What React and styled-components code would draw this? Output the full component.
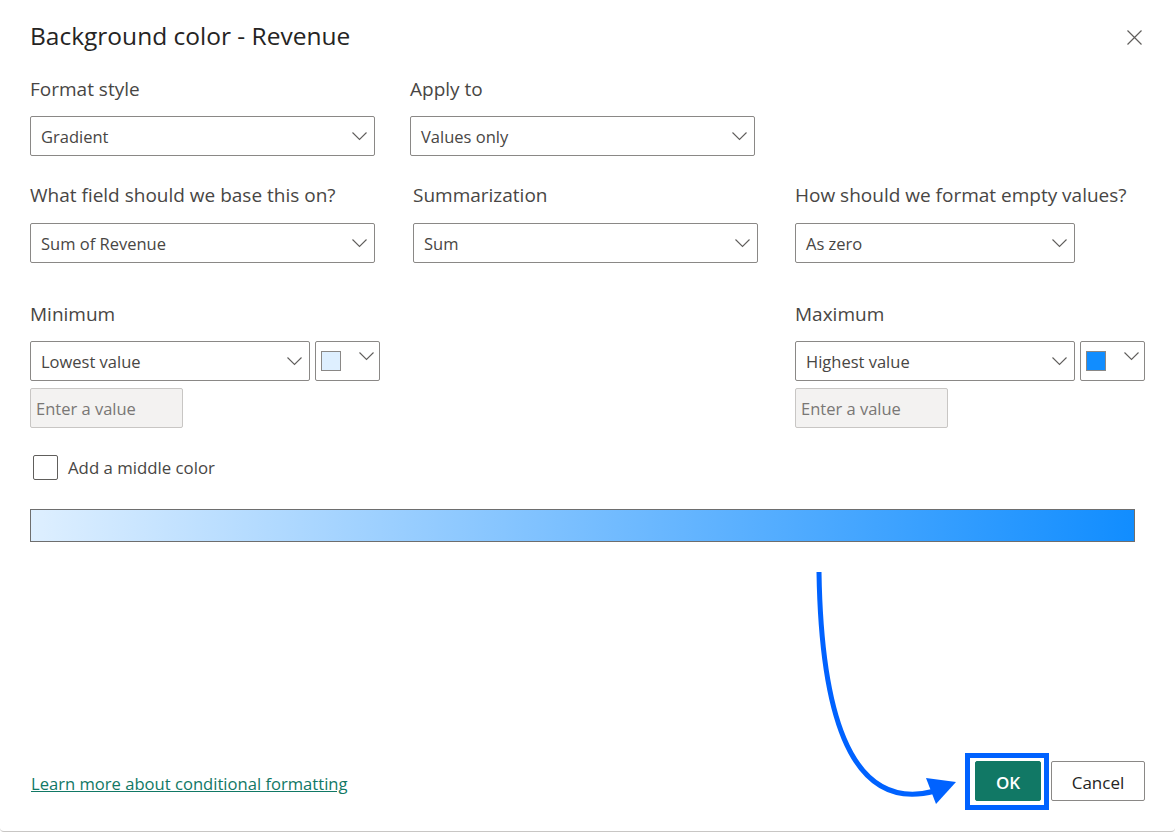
import styled, { createGlobalStyle } from 'styled-components';

const GlobalStyle = createGlobalStyle`
  html, body {
    margin: 0;
    padding: 0;
    background: #fff;
  }
  body {
    font-family: 'Open Sans', 'Noto Sans', sans-serif;
    color: #3b3a39;
  }
`;

const Dialog = styled.div`
  position: relative;
  box-sizing: border-box;
  width: 1175px;
  height: 832px;
  padding: 20px 30px 30px;
  display: flex;
  flex-direction: column;
  background: #fff;
  border-bottom: 1px solid #c8c6c4;
  border-radius: 0 0 4px 4px;
  overflow: hidden;
`;

const Header = styled.div`
  display: flex;
  justify-content: space-between;
  align-items: center;
  height: 32px;
`;

const Title = styled.h1`
  margin: 0;
  font-size: 24.5px;
  line-height: 32px;
  font-weight: 400;
  color: #252423;
`;

const CloseButton = styled.button`
  display: flex;
  margin: 2px 3px 0 0;
  padding: 0;
  border: 0;
  background: none;
`;

const Row = styled.div`
  display: flex;
  margin-top: ${(p) => p.$top}px;
`;

const Field = styled.div`
  width: ${(p) => p.$width}px;
  margin-left: ${(p) => p.$left || 0}px;
  flex-shrink: 0;
`;

const Label = styled.div`
  height: 26px;
  margin-bottom: ${(p) => p.$gap}px;
  font-size: 19px;
  line-height: 26px;
  white-space: nowrap;
  color: #484644;
`;

const SelectBox = styled.div`
  box-sizing: border-box;
  display: flex;
  align-items: center;
  justify-content: space-between;
  width: ${(p) => (p.$width ? `${p.$width}px` : '100%')};
  height: 40px;
  padding: 0 7px 0 10px;
  border: 1px solid #8a8886;
  border-radius: 2px;
  font-size: 16.5px;
  color: #484644;
  background: #fff;
  white-space: nowrap;
`;

const PickerBox = styled.div`
  box-sizing: border-box;
  display: flex;
  justify-content: space-between;
  width: 65px;
  height: 40px;
  padding: 9px 5px 0 5px;
  border: 1px solid #8a8886;
  border-radius: 2px;
`;

const Swatch = styled.div`
  box-sizing: border-box;
  width: 20px;
  height: 20px;
  border: 1px solid #8a8886;
  background: ${(p) => p.$color};
`;

const PickerChevron = styled.div`
  display: flex;
  height: 11px;
`;

const ColorRow = styled.div`
  display: flex;
  gap: 5px;
`;

const DisabledInput = styled.div`
  box-sizing: border-box;
  width: 153px;
  height: 40px;
  margin-top: 7px;
  padding: 0 5px;
  display: flex;
  align-items: center;
  border: 1px solid #c8c6c4;
  border-radius: 2px;
  background: #f3f2f1;
  color: #797775;
  font-size: 16.5px;
`;

const CheckRow = styled.label`
  display: flex;
  align-items: center;
  gap: 10px;
  height: 25px;
  margin: 27px 0 0 3px;
  font-size: 16.8px;
  line-height: 29px;
  color: #484644;
`;

const CheckBox = styled.span`
  box-sizing: border-box;
  width: 25px;
  height: 25px;
  border: 1px solid #605e5c;
  border-radius: 2px;
`;

const GradientBar = styled.div`
  box-sizing: border-box;
  width: 1105px;
  height: 33px;
  margin-top: 29px;
  border: 1px solid #6e6e6e;
  background: linear-gradient(to right, #deefff, #118dff);
`;

const Footer = styled.div`
  margin-top: auto;
  display: flex;
  align-items: center;
  justify-content: space-between;
`;

const LearnLink = styled.a`
  margin: 4px 0 0 1px;
  font-size: 16.6px;
  color: #117865;
  text-decoration: underline;
`;

const Actions = styled.div`
  display: flex;
  gap: 10px;
`;

const Button = styled.button`
  box-sizing: border-box;
  width: ${(p) => p.$width}px;
  height: 40px;
  padding: 2px 0 0;
  border: 1px solid ${(p) => (p.$primary ? '#117865' : '#8a8886')};
  border-radius: 2px;
  background: ${(p) => (p.$primary ? '#117865' : '#fff')};
  color: ${(p) => (p.$primary ? '#fff' : '#252423')};
  font-family: inherit;
  font-size: 17px;
  font-weight: ${(p) => (p.$primary ? 600 : 400)};
`;

const Highlight = styled.div`
  position: absolute;
  left: 965px;
  top: 753px;
  box-sizing: border-box;
  width: 84px;
  height: 57px;
  border: 5px solid #0062ff;
  pointer-events: none;
`;

const ArrowLayer = styled.svg`
  position: absolute;
  left: 0;
  top: 0;
  pointer-events: none;
`;

function Chevron({ width = 15 }) {
  return (
    <svg width={width} height="10" viewBox="0 0 15 10" fill="none">
      <path d="M0.5 1.5 L7.5 8.5 L14.5 1.5" stroke="#605e5c" strokeWidth="1.1" />
    </svg>
  );
}

function Select({ value, width }) {
  return (
    <SelectBox $width={width}>
      {value}
      <Chevron />
    </SelectBox>
  );
}

function ColorPicker({ color }) {
  return (
    <PickerBox>
      <Swatch $color={color} />
      <PickerChevron>
        <Chevron />
      </PickerChevron>
    </PickerBox>
  );
}

function App() {
  return (
    <Dialog>
      <GlobalStyle />
      <Header>
        <Title>Background color - Revenue</Title>
        <CloseButton aria-label="Close">
          <svg width="15" height="15" viewBox="0 0 15 15" fill="none">
            <path d="M0.5 0.5 L14.5 14.5 M14.5 0.5 L0.5 14.5" stroke="#605e5c" strokeWidth="1.2" />
          </svg>
        </CloseButton>
      </Header>

      <Row $top={24}>
        <Field $width={345}>
          <Label $gap={14}>Format style</Label>
          <Select value="Gradient" />
        </Field>
        <Field $width={345} $left={35}>
          <Label $gap={14}>Apply to</Label>
          <Select value="Values only" />
        </Field>
      </Row>

      <Row $top={26}>
        <Field $width={345}>
          <Label $gap={15}>What field should we base this on?</Label>
          <Select value="Sum of Revenue" />
        </Field>
        <Field $width={345} $left={38}>
          <Label $gap={15}>Summarization</Label>
          <Select value="Sum" />
        </Field>
        <Field $width={280} $left={37}>
          <Label $gap={15}>How should we format empty values?</Label>
          <Select value="As zero" />
        </Field>
      </Row>

      <Row $top={38}>
        <Field $width={350}>
          <Label $gap={14}>Minimum</Label>
          <ColorRow>
            <Select value="Lowest value" width={280} />
            <ColorPicker color="#deefff" />
          </ColorRow>
          <DisabledInput>Enter a value</DisabledInput>
        </Field>
        <Field $width={350} $left={415}>
          <Label $gap={14}>Maximum</Label>
          <ColorRow>
            <Select value="Highest value" width={280} />
            <ColorPicker color="#118dff" />
          </ColorRow>
          <DisabledInput>Enter a value</DisabledInput>
        </Field>
      </Row>

      <CheckRow>
        <CheckBox />
        Add a middle color
      </CheckRow>

      <GradientBar />

      <Footer>
        <LearnLink href="#">Learn more about conditional formatting</LearnLink>
        <Actions>
          <Button $primary $width={66}>OK</Button>
          <Button $width={94}>Cancel</Button>
        </Actions>
      </Footer>

      <Highlight />
      <ArrowLayer width="1175" height="832" viewBox="0 0 1175 832" fill="none">
        <path d="M819 572 C 821 700, 845 815, 935 791" stroke="#0062ff" strokeWidth="5" />
        <polygon points="926,778 956,782 936,804" fill="#0062ff" />
      </ArrowLayer>
    </Dialog>
  );
}

export default App;
